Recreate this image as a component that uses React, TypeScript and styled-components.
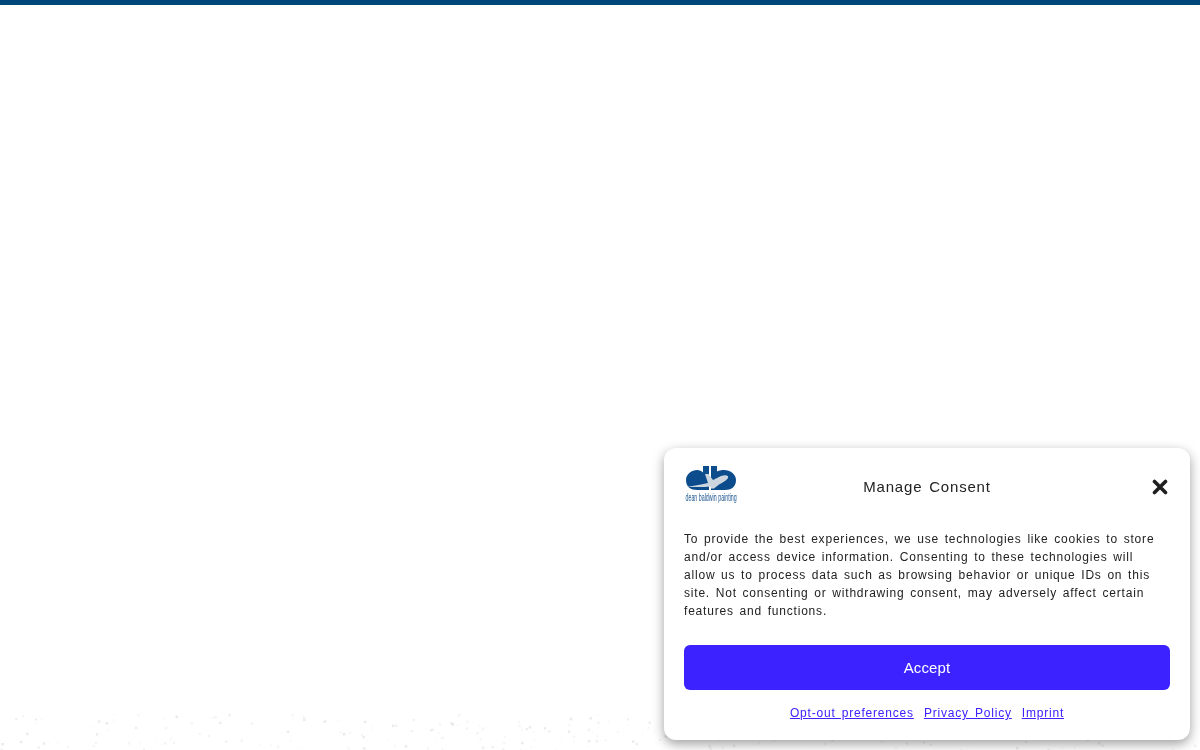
import React from "react";
import styled, { createGlobalStyle } from "styled-components";

const GlobalStyle = createGlobalStyle`
  html, body {
    margin: 0;
    height: 100%;
    background: #ffffff;
    font-family: "Liberation Sans", Arial, sans-serif;
    overflow: hidden;
  }
`;

const Page = styled.div`
  height: 750px;
  display: flex;
  flex-direction: column;
`;

const TopBar = styled.div`
  height: 5px;
  background: #004678;
`;

const Speckles = styled.svg`
  position: absolute;
  left: 0;
  bottom: 0;
`;

const Banner = styled.div`
  position: fixed;
  right: 10px;
  bottom: 10px;
  width: 526px;
  height: 292px;
  box-sizing: border-box;
  padding: 15px 20px 0;
  background: #ffffff;
  border-radius: 12px;
  box-shadow: 0 4px 12px rgba(0, 0, 0, 0.38);
  display: flex;
  flex-direction: column;
  letter-spacing: 0.8px;
  word-spacing: 2px;
`;

const Header = styled.div`
  display: grid;
  grid-template-columns: 54px 1fr 54px;
  height: 48px;
`;

const LogoMark = styled.svg`
  align-self: start;
`;

const Title = styled.div`
  font-size: 15px;
  line-height: 48px;
  color: #222222;
  text-align: center;
`;

const CloseButton = styled.button`
  width: 20px;
  height: 48px;
  padding: 0;
  border: none;
  background: none;
  justify-self: end;
  display: flex;
  align-items: center;
  justify-content: center;
  color: #1f1f1f;
`;

const Message = styled.p`
  margin: 19px 0 0;
  font-size: 12px;
  line-height: 18px;
  color: #222222;
  word-spacing: 1.6px;
`;

const AcceptButton = styled.button`
  margin-top: 25px;
  height: 45px;
  border: none;
  border-radius: 6px;
  background: #3b22ff;
  color: #ffffff;
  font-family: inherit;
  font-size: 15px;
  letter-spacing: 0.1px;
`;

const Links = styled.div`
  margin-top: 15px;
  display: flex;
  justify-content: center;
  gap: 10px;
`;

const DocLink = styled.a`
  font-size: 12px;
  line-height: 16px;
  color: #3b22ff;
  text-decoration: underline;
`;

const Logo = () => (
  <LogoMark width="54" height="42" viewBox="0 0 54 42">
    <path
      d="M19 3 H25 V27 H13 C7 27 2 24 2 17 C2 11 8 7 13 7 C15.5 7 17.5 8 19 9.5 Z"
      fill="#0c4c8c"
    />
    <path
      d="M27 3 H33 V8.5 C35 7.5 37 7 40 7 C46 7 52 11 52 17 C52 24 47 27 41 27 H27 Z"
      fill="#0c4c8c"
    />
    <path
      d="M3 24 L17 21.5 L24 20 L21 11 L24.5 11 L29 17 L37 13 C42 11.5 45 12.5 44 15 C43 17 39 19.5 35 21.5 L30 25.5 L26.5 25.5 L27 23.5 L20 24 Z"
      fill="#ccd5de"
    />
    <text
      transform="translate(1.5 38) scale(0.53 1)"
      fontFamily="'Liberation Sans', sans-serif"
      fontSize="10"
      fill="#1d5590"
      letterSpacing="0"
      wordSpacing="0"
    >
      dean baldwin painting
    </text>
  </LogoMark>
);

// faint paint texture along the bottom of the page
const dots = Array.from({ length: 520 }, (_, i) => {
  const a = Math.sin(i * 12.9898) * 43758.5453;
  const b = Math.sin(i * 78.233) * 12543.1234;
  const c = Math.sin(i * 39.425) * 9631.771;
  const strength = c - Math.floor(c);
  return {
    x: (a - Math.floor(a)) * 1200,
    y: (b - Math.floor(b)) * 36,
    o: 0.012 + strength * strength * strength * 0.12,
    s: 1 + strength * 1.5,
  };
});

export default function App() {
  return (
    <Page>
      <GlobalStyle />
      <TopBar />
      <Speckles width="1200" height="36" viewBox="0 0 1200 36">
        {dots.map((d, i) => (
          <rect key={i} x={d.x} y={d.y} width={d.s} height={d.s} fill="#555555" opacity={d.o} />
        ))}
      </Speckles>
      <Banner>
        <Header>
          <Logo />
          <Title>Manage Consent</Title>
          <CloseButton aria-label="Close">
            <svg width="16" height="16" viewBox="0 0 16 16">
              <path d="M2.5 2.5 L13.5 13.5 M13.5 2.5 L2.5 13.5" stroke="currentColor" strokeWidth="3.6" strokeLinecap="round" />
            </svg>
          </CloseButton>
        </Header>
        <Message>
          To provide the best experiences, we use technologies like cookies to store and/or access
          device information. Consenting to these technologies will allow us to process data such
          as browsing behavior or unique IDs on this site. Not consenting or withdrawing consent,
          may adversely affect certain features and functions.
        </Message>
        <AcceptButton>Accept</AcceptButton>
        <Links>
          <DocLink href="#">Opt-out preferences</DocLink>
          <DocLink href="#">Privacy Policy</DocLink>
          <DocLink href="#">Imprint</DocLink>
        </Links>
      </Banner>
    </Page>
  );
}
